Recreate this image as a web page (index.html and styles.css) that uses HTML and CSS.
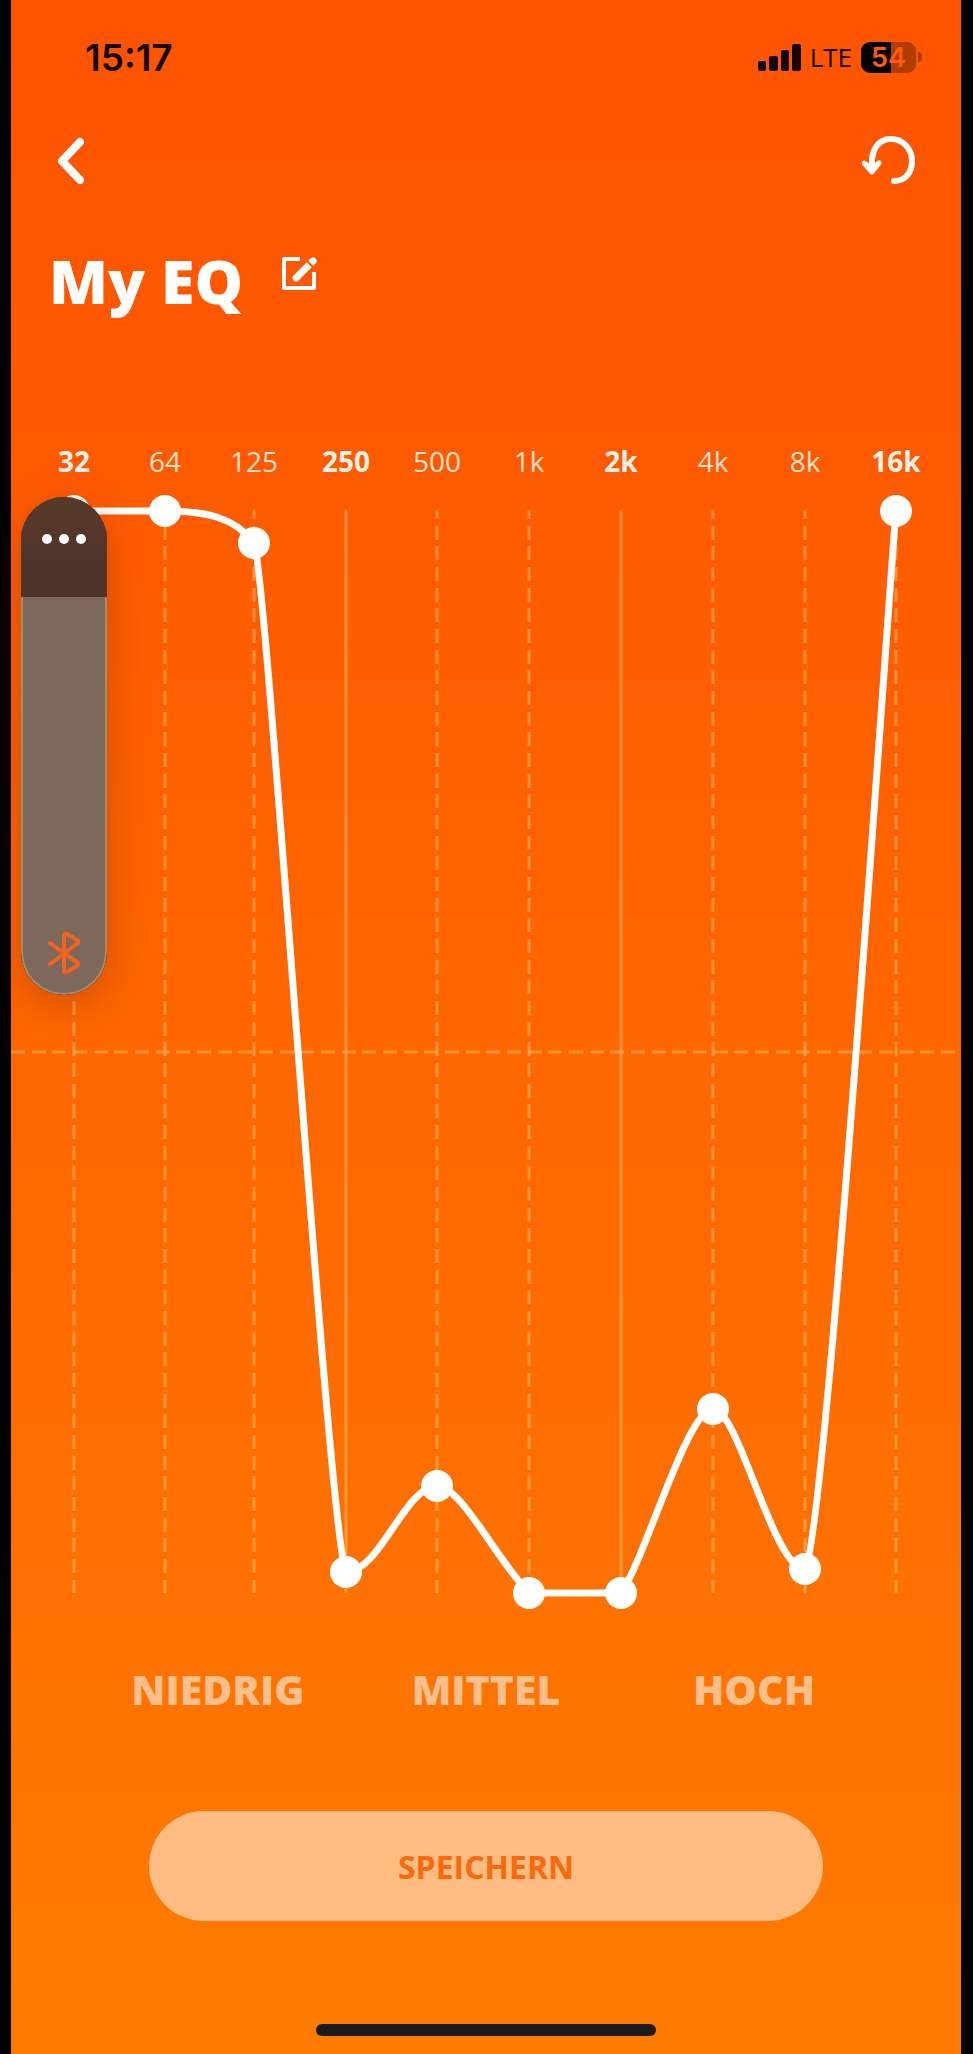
FILE: index.html
```
<!DOCTYPE html>
<html lang="de">
<head>
    <meta charset="UTF-8">
    <meta name="viewport" content="width=device-width, initial-scale=1.0">
    <title>My EQ</title>
    <link rel="stylesheet" href="styles.css">
</head>
<body>

<div class="phone">
    <div class="status-bar">
        <span class="time">15:17</span>
        <div class="status-icons">
            <svg class="signal" viewBox="0 0 43 27" width="43" height="27">
                <rect x="0" y="17" width="8" height="10" rx="2"/>
                <rect x="11" y="12" width="9" height="15" rx="2"/>
                <rect x="23" y="6" width="8" height="21" rx="2"/>
                <rect x="34" y="0" width="9" height="27" rx="2"/>
            </svg>
            <span class="network">LTE</span>
            <div class="battery"><span>54</span></div>
        </div>
    </div>

    <header class="nav">
        <button class="icon-button" type="button" aria-label="Zurück">
            <svg viewBox="0 0 28 48" width="28" height="48">
                <path d="M24 5 6 24l18 19" fill="none" stroke="currentColor" stroke-width="8" stroke-linecap="round" stroke-linejoin="round"/>
            </svg>
        </button>
        <button class="icon-button" type="button" aria-label="Zurücksetzen">
            <svg viewBox="0 0 54 50" width="54" height="50">
                <path d="M10 29C9 13 17 3 29 3c12 0 21 10 21 22 0 12-7 20-18 20" fill="none" stroke="currentColor" stroke-width="6" stroke-linecap="round"/>
                <path d="M2 27l8 5 7-5-7 9z" fill="currentColor" stroke="currentColor" stroke-width="5" stroke-linejoin="round"/>
            </svg>
        </button>
    </header>

    <main>
        <div class="title-row">
            <h1>My EQ</h1>
            <button class="icon-button" type="button" aria-label="Name bearbeiten">
                <svg viewBox="0 0 36 36" width="36" height="36">
                    <path d="M19 3H3v29h30V16" fill="none" stroke="currentColor" stroke-width="4" stroke-linejoin="round"/>
                    <path d="M15 22 32 5" stroke="currentColor" stroke-width="7" stroke-linecap="round"/>
                    <path d="m25 4 8 8" stroke="#ff5700" stroke-width="2"/>
                </svg>
            </button>
        </div>

        <svg class="chart" viewBox="0 0 950 1190" role="img" aria-label="Equalizer">
            <g class="freq">
                <text class="strong" x="63" y="42">32</text>
                <text x="154" y="42">64</text>
                <text x="243" y="42">125</text>
                <text class="strong" x="335" y="42">250</text>
                <text x="426" y="42">500</text>
                <text x="518" y="42">1k</text>
                <text class="strong" x="610" y="42">2k</text>
                <text x="702" y="42">4k</text>
                <text x="794" y="42">8k</text>
                <text class="strong" x="885" y="42">16k</text>
            </g>
            <path class="grid dashed" d="M63 80v1083M154 80v1083M243 80v1083M426 80v1083M518 80v1083M702 80v1083M794 80v1083M885 80v1083"/>
            <path class="grid" d="M335 80v1083M610 80v1083"/>
            <path class="grid dashed-mid" d="M0 622h950"/>
            <path class="curve" d="M63 81H154C194 81 224 87 243 113C255 130 318 1110 335 1142C369 1142 394 1056 426 1056C450 1056 486 1130 518 1163H610C634 1130 676 979 702 979C728 979 762 1139 794 1139C815 1110 880 130 885 81"/>
            <g class="points">
                <circle cx="63" cy="81" r="16"/>
                <circle cx="154" cy="81" r="16"/>
                <circle cx="243" cy="113" r="16"/>
                <circle cx="335" cy="1142" r="16"/>
                <circle cx="426" cy="1056" r="16"/>
                <circle cx="518" cy="1163" r="16"/>
                <circle cx="610" cy="1163" r="16"/>
                <circle cx="702" cy="979" r="16"/>
                <circle cx="794" cy="1139" r="16"/>
                <circle cx="885" cy="81" r="16"/>
            </g>
        </svg>

        <div class="bands">
            <span>NIEDRIG</span>
            <span>MITTEL</span>
            <span>HOCH</span>
        </div>

        <button class="save" type="button">SPEICHERN</button>
    </main>

    <div class="home-indicator"></div>

    <!-- System volume overlay -->
    <div class="volume">
        <button class="volume-more" type="button" aria-label="Mehr">
            <svg viewBox="0 0 44 12" width="44" height="12">
                <circle cx="5" cy="6" r="5"/>
                <circle cx="22" cy="6" r="5"/>
                <circle cx="39" cy="6" r="5"/>
            </svg>
        </button>
        <div class="volume-level">
            <svg viewBox="0 0 32 44" width="32" height="44">
                <path d="M2 12 30 32Q31 34 29 35L19 41Q16 42 16 40V4Q16 2 19 3L29 9Q31 10 30 12L2 33" fill="none" stroke="currentColor" stroke-width="4" stroke-linecap="round" stroke-linejoin="round"/>
            </svg>
        </div>
    </div>
</div>

</body>
</html>
```
FILE: styles.css
```
* {
    box-sizing: border-box;
}
body {
    margin: 0;
    background: #000;
    color: #fff;
    font-family: "Open Sans", "Noto Sans", sans-serif;
}
button {
    font: inherit;
    border: 0;
    padding: 0;
    cursor: pointer;
}
svg {
    display: block;
}
.phone {
    position: relative;
    display: flex;
    flex-direction: column;
    min-height: 100vh;
    margin: 0 12px 0 11px;
    background: linear-gradient(#ff5300, #ff5a00 22%, #ff6600 50%, #ff7200 80%, #ff7b00);
}
.status-bar {
    display: flex;
    justify-content: space-between;
    align-items: center;
    height: 114px;
    padding: 0 45px 0 74px;
    color: #120500;
}
.time {
    font-family: Inter, sans-serif;
    font-size: 37px;
    font-weight: 600;
}
.status-icons {
    display: flex;
    align-items: center;
    gap: 9px;
}
.signal {
    fill: #120500;
}
.network {
    font-size: 26px;
    font-weight: 500;
    line-height: 28px;
}
.battery {
    position: relative;
    width: 55px;
    height: 31px;
    border-radius: 9px;
    background: linear-gradient(90deg, #000 54%, #b03c00 54%);
    color: #ff5a08;
    font-family: Inter, sans-serif;
    font-size: 27px;
    font-weight: 600;
    line-height: 31px;
    text-align: center;
}
.battery::after {
    content: "";
    position: absolute;
    top: 10px;
    right: -6px;
    width: 4px;
    height: 10px;
    border-radius: 0 4px 4px 0;
    background: #b03c00;
}
.nav {
    display: flex;
    justify-content: space-between;
    align-items: center;
    height: 94px;
    padding: 0 45px;
}
.icon-button {
    background: none;
    color: #fff;
}
.title-row {
    display: flex;
    align-items: flex-start;
    gap: 38px;
    height: 222px;
    padding: 31px 38px 0;
}
.title-row .icon-button {
    margin-top: 17px;
}
h1 {
    margin: 0;
    font-size: 61px;
    font-weight: 800;
    line-height: 84px;
}
.chart {
    width: 100%;
    height: auto;
}
.freq {
    fill: #ffe0cc;
    font-size: 28px;
    text-anchor: middle;
}
.freq .strong {
    fill: #fff0e6;
    font-weight: 700;
}
.grid {
    fill: none;
    stroke: #ffc070;
    stroke-opacity: 0.5;
    stroke-width: 3;
}
.dashed {
    stroke-dasharray: 14 7 14 6 14 7;
    stroke-dashoffset: 5;
}
.dashed-mid {
    stroke-dasharray: 14 7 14 6 14 7;
}
.curve {
    fill: none;
    stroke: #fff;
    stroke-width: 7;
    stroke-linejoin: round;
}
.points {
    fill: #fff;
}
.bands {
    display: grid;
    grid-template-columns: repeat(3, 1fr);
    padding: 0 73px;
    margin-top: 41px;
    color: #ffbe8a;
    font-size: 41px;
    font-weight: 800;
    line-height: 56px;
    text-align: center;
}
.save {
    display: block;
    width: 71%;
    height: 110px;
    margin: 94px auto 0;
    border-radius: 55px;
    background: #ffbb80;
    color: #f96a0c;
    font-size: 32px;
    font-weight: 700;
}
.home-indicator {
    width: 340px;
    height: 12px;
    margin: auto auto 18px;
    border-radius: 6px;
    background: #1b1b1b;
}
.volume {
    position: absolute;
    top: 497px;
    left: 10px;
    display: flex;
    flex-direction: column;
    width: 86px;
    height: 498px;
    border-radius: 43px;
    overflow: hidden;
    background: #50352a;
    box-shadow: 0 10px 40px rgba(120, 40, 0, 0.35);
}
.volume-more {
    display: flex;
    justify-content: center;
    height: 100px;
    padding-top: 36px;
    background: linear-gradient(#583a2c, #4e3127);
}
.volume-more svg {
    fill: #fff;
}
.volume-level {
    flex: 1;
    display: flex;
    justify-content: center;
    align-items: flex-end;
    padding-bottom: 18px;
    border: 2px solid #a08c7e;
    border-top: 0;
    border-radius: 0 0 43px 43px;
    background: #7d685a;
    color: #f26322;
}
```
